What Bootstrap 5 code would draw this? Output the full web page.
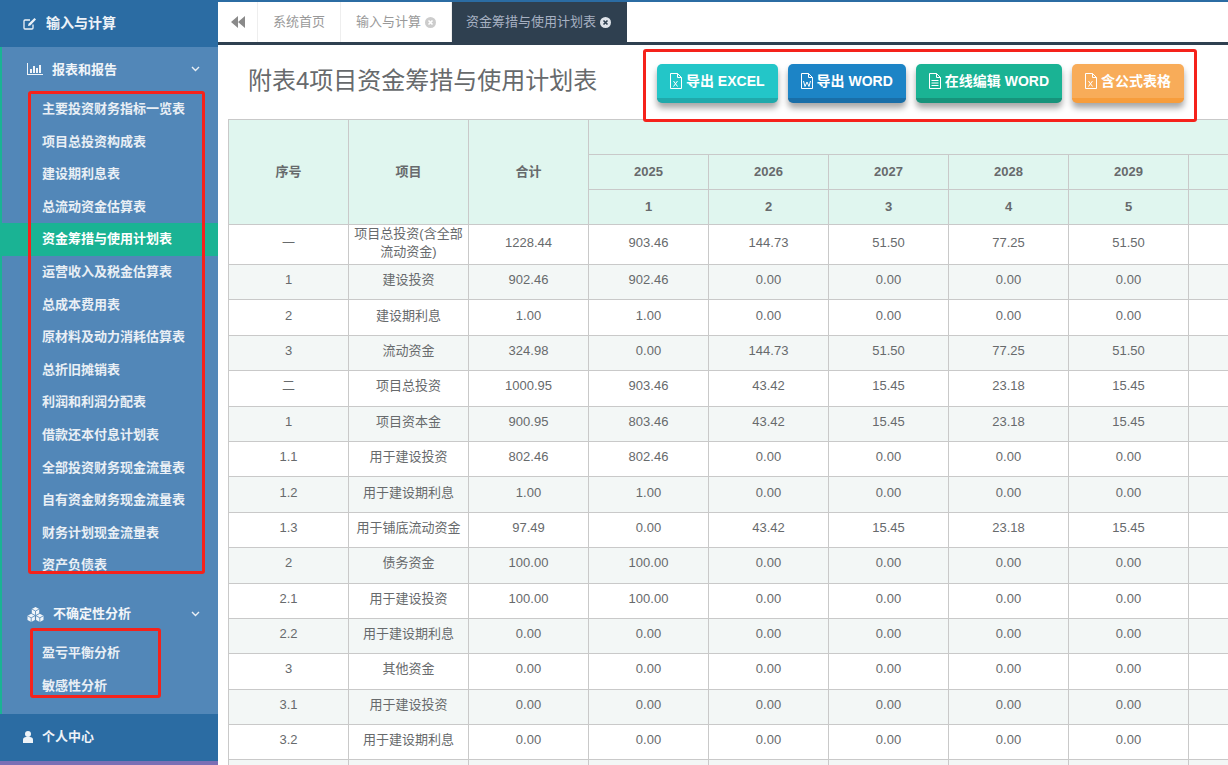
<!DOCTYPE html>
<html lang="zh-CN">
<head>
    <meta charset="UTF-8">
    <meta name="viewport" content="width=device-width, initial-scale=1.0">
    <title>附表4项目资金筹措与使用计划表</title>
    <link href="https://cdn.jsdelivr.net/npm/bootstrap@5.3.0/dist/css/bootstrap.min.css" rel="stylesheet">
    <style>
        html, body {
            height: 765px;
            overflow: hidden;
        }
        body {
            font-family: "Liberation Sans", "Noto Sans CJK SC", sans-serif;
            font-size: 13px;
            color: #676a6c;
        }
        .app-wrap {
            height: 765px;
            position: relative;
        }
        /* sidebar */
        .side-bar {
            width: 218px;
            height: 765px;
            background: #5287b8;
            color: #e9eff5;
            font-weight: 700;
            flex-shrink: 0;
        }
        .side-top {
            height: 47px;
            background: #2b6ca3;
            padding-left: 23px;
            font-size: 14px;
            color: #eef3f8;
            gap: 9px;
        }
        .side-mid {
            height: 667px;
            border-left: 2px solid #1ab394;
        }
        .side-head {
            height: 44.5px;
            font-size: 13px;
            padding-left: 25px;
            padding-right: 18px;
            margin-bottom: 1.5px;
            color: #f1f5f9;
        }
        .side-head.second {
            margin-top: 10px;
            margin-bottom: 1px;
        }
        .head-label {
            margin-left: 9px;
        }
        .side-link {
            height: 32.6px;
            line-height: 32.6px;
            padding-left: 40px;
            color: #e9eff5;
            text-decoration: none;
            display: block;
            white-space: nowrap;
        }
        .side-link.on {
            background: #1ab394;
            color: #fff;
        }
        .side-foot {
            height: 47px;
            background: #2b6ca3;
            padding-left: 23px;
            padding-bottom: 2px;
            color: #eef3f8;
            gap: 9px;
        }
        .side-strip {
            height: 4px;
            background: #7b6fb5;
        }
        /* tab strip */
        .main-area {
            min-width: 0;
            height: 765px;
            overflow: hidden;
        }
        .tab-strip {
            height: 45px;
            border-top: 2px solid #2b6ca3;
            border-bottom: 3px solid #2f4050;
            background: #fff;
        }
        .tab-back {
            width: 40px;
            border-right: 1px solid #eee;
        }
        .tab-item {
            padding: 0 15px;
            color: #999;
            border-right: 1px solid #eee;
            gap: 4px;
            white-space: nowrap;
        }
        .tab-item.on {
            background: #2f4050;
            color: #a7b1c2;
            border-right: 0;
            padding: 0 16px 0 14px;
        }
        /* title and buttons */
        .page-head {
            height: 74px;
            padding-left: 30px;
            padding-right: 44px;
        }
        .page-title {
            font-size: 24px;
            font-weight: 400;
            margin: 0;
            color: #676a6c;
            padding-bottom: 2px;
        }
        .btn-row {
            gap: 10px;
            margin-top: 3px;
        }
        .act-btn {
            height: 39px;
            font-size: 14px;
            font-weight: 700;
            color: #fff;
            border: 0;
            border-radius: 5px;
            padding: 0 13px;
            gap: 4px;
            display: flex;
            align-items: center;
            white-space: nowrap;
            box-shadow: 0 5px 6px rgba(0, 0, 0, .35);
        }
        .btn-cyan { background: #23c6c8; border-bottom: 5px solid #20a9ab; }
        .btn-blue { background: #1c84c6; border-bottom: 5px solid #196ea8; }
        .btn-teal { background: #1ab394; border-bottom: 5px solid #17937b; }
        .btn-amber { background: #f8ac59; border-bottom: 5px solid #f79d3c; }
        /* table */
        .plan-table {
            table-layout: fixed;
            width: 1080px;
            margin: 0 0 0 10px;
            border-collapse: collapse;
        }
        .plan-table col {
            width: 120px;
        }
        .plan-table th, .plan-table td {
            border: 1px solid #c9c9c9;
            text-align: center;
            vertical-align: middle;
            padding: 0 4px 4px;
            font-size: 13px;
            line-height: 20px;
            height: 35.4px;
            color: #676a6c;
            background: #fff;
        }
        .plan-table thead th {
            background: #e0f6ef;
            height: 35px;
            padding-bottom: 0;
            font-weight: 700;
        }
        .plan-table tbody tr.first-row td {
            height: 39px;
            line-height: 18px;
            padding-bottom: 3px;
        }
        .plan-table tbody tr:nth-child(even) td {
            background: #f3f7f6;
        }
        /* red marks laid over the screenshot */
        .mark-box {
            position: absolute;
            border: 3px solid #f5221b;
            border-radius: 3px;
            pointer-events: none;
        }
        .mark-a { left: 28px; top: 91px; width: 177px; height: 483px; }
        .mark-b { left: 30px; top: 628px; width: 131px; height: 70px; }
        .mark-c { left: 643px; top: 49px; width: 554px; height: 73px; }
    </style>
</head>
<body>
    <div class="app-wrap d-flex">
        <div class="side-bar d-flex flex-column">
            <div class="side-top d-flex align-items-center">
                <svg width="14" height="13" viewBox="0 0 14 13" fill="none" stroke="#eef3f8" stroke-width="1.3"><path d="M10 7.5V11a1 1 0 0 1-1 1H2a1 1 0 0 1-1-1V4a1 1 0 0 1 1-1h5"/><path d="M5 9l.5-2.3L11.5 1 13 2.5 7.3 8.5z" fill="#eef3f8" stroke="none"/></svg>
                <span>输入与计算</span>
            </div>
            <div class="side-mid">
                <div class="side-head d-flex align-items-center">
                    <svg width="16" height="12" viewBox="0 0 16 12" fill="#f1f5f9"><path d="M0 0h1v11h15v1H0z"/><path d="M3 6h2v4H3zM6 3h2v7H6zM9 5h2v5H9zM12 2h2v8h-2z"/></svg>
                    <span class="flex-grow-1 head-label">报表和报告</span>
                    <svg width="9" height="6" viewBox="0 0 9 6" fill="none" stroke="#e9eff5" stroke-width="1.4"><path d="M1 1l3.500 3.500L8 1"/></svg>
                </div>
                <div class="side-links">
                    <a class="side-link" href="#">主要投资财务指标一览表</a>
                    <a class="side-link" href="#">项目总投资构成表</a>
                    <a class="side-link" href="#">建设期利息表</a>
                    <a class="side-link" href="#">总流动资金估算表</a>
                    <a class="side-link on" href="#">资金筹措与使用计划表</a>
                    <a class="side-link" href="#">运营收入及税金估算表</a>
                    <a class="side-link" href="#">总成本费用表</a>
                    <a class="side-link" href="#">原材料及动力消耗估算表</a>
                    <a class="side-link" href="#">总折旧摊销表</a>
                    <a class="side-link" href="#">利润和利润分配表</a>
                    <a class="side-link" href="#">借款还本付息计划表</a>
                    <a class="side-link" href="#">全部投资财务现金流量表</a>
                    <a class="side-link" href="#">自有资金财务现金流量表</a>
                    <a class="side-link" href="#">财务计划现金流量表</a>
                    <a class="side-link" href="#">资产负债表</a>
                </div>
                <div class="side-head second d-flex align-items-center">
                    <svg width="17" height="15" viewBox="0 0 17 15" fill="#f1f5f9"><path d="M8.500 0l3.700 2v4.200L8.500 8.200 4.800 6.200V2z"/><path d="M4.200 6.800l3.700 2V13L4.200 15 .5 13V8.800zM12.800 6.800l3.700 2V13l-3.700 2-3.700-2V8.800z"/><path d="M4.800 2l3.700 2 3.700-2M8.500 4v4M.5 8.800l3.700 2 3.700-2M4.200 10.800V15M9.100 8.800l3.700 2 3.700-2M12.800 10.800V15" fill="none" stroke="#5287b8" stroke-width=".8"/></svg>
                    <span class="flex-grow-1 head-label">不确定性分析</span>
                    <svg width="9" height="6" viewBox="0 0 9 6" fill="none" stroke="#e9eff5" stroke-width="1.4"><path d="M1 1l3.500 3.500L8 1"/></svg>
                </div>
                <a class="side-link" href="#">盈亏平衡分析</a>
                <a class="side-link" href="#">敏感性分析</a>
            </div>
            <div class="side-foot d-flex align-items-center">
                <svg width="10" height="12" viewBox="0 0 10 12" fill="#eef3f8"><circle cx="5" cy="3" r="3"/><path d="M0 12V8.500C0 7 1.500 6 3 6h4c1.500 0 3 1 3 2.500V12z"/></svg>
                <span>个人中心</span>
            </div>
            <div class="side-strip"></div>
        </div>

        <div class="main-area flex-grow-1">
            <div class="tab-strip d-flex">
                <div class="tab-back d-flex align-items-center justify-content-center">
                    <svg width="14" height="12" viewBox="0 0 14 12" fill="#8a8a8a"><path d="M7 0v12L0 6zM14 0v12L7 6z"/></svg>
                </div>
                <div class="tab-item d-flex align-items-center">系统首页</div>
                <div class="tab-item d-flex align-items-center">输入与计算
                    <svg width="11" height="11" viewBox="0 0 11 11"><circle cx="5.500" cy="5.500" r="5.500" fill="#ccc"/><path d="M3.500 3.500l4 4M7.500 3.500l-4 4" stroke="#fff" stroke-width="1.6"/></svg>
                </div>
                <div class="tab-item on d-flex align-items-center">资金筹措与使用计划表
                    <svg width="11" height="11" viewBox="0 0 11 11"><circle cx="5.500" cy="5.500" r="5.500" fill="#dfe4ea"/><path d="M3.500 3.500l4 4M7.500 3.500l-4 4" stroke="#2f4050" stroke-width="1.6"/></svg>
                </div>
            </div>

            <div class="page-head d-flex align-items-center justify-content-between">
                <h2 class="page-title">附表4项目资金筹措与使用计划表</h2>
                <div class="d-flex btn-row">
                    <button type="button" class="btn act-btn btn-cyan">
                        <svg width="12" height="16" viewBox="0 0 12 16" fill="none" stroke="#fff"><path d="M.5.5h7l4 4v11H.5zM7.500.5v4h4"/><path d="M3.500 8l4 5.500M7.500 8l-4 5.500" stroke-width="1"/></svg>
                        导出 EXCEL
                    </button>
                    <button type="button" class="btn act-btn btn-blue">
                        <svg width="12" height="16" viewBox="0 0 12 16" fill="none" stroke="#fff"><path d="M.5.5h7l4 4v11H.5zM7.500.5v4h4"/><path d="M2.500 8l1.500 5.500 2-4.500 2 4.500L9.500 8" stroke-width="1"/></svg>
                        导出 WORD
                    </button>
                    <button type="button" class="btn act-btn btn-teal">
                        <svg width="12" height="16" viewBox="0 0 12 16" fill="none" stroke="#fff"><path d="M.5.5h7l4 4v11H.5zM7.500.5v4h4"/><path d="M2.500 7.500h7M2.500 10h7M2.500 12.500h7" stroke-width="1"/></svg>
                        在线编辑 WORD
                    </button>
                    <button type="button" class="btn act-btn btn-amber">
                        <svg width="12" height="16" viewBox="0 0 12 16" fill="none" stroke="#fff"><path d="M.5.5h7l4 4v11H.5zM7.500.5v4h4"/><path d="M3.500 8l4 5.500M7.500 8l-4 5.500" stroke-width="1"/></svg>
                        含公式表格
                    </button>
                </div>
            </div>

            <table class="plan-table">
                <colgroup><col><col><col><col><col><col><col><col><col></colgroup>
                <thead>
                    <tr>
                        <th rowspan="3">序号</th>
                        <th rowspan="3">项目</th>
                        <th rowspan="3">合计</th>
                        <th colspan="6"></th>
                    </tr>
                    <tr><th>2025</th><th>2026</th><th>2027</th><th>2028</th><th>2029</th><th></th></tr>
                    <tr><th>1</th><th>2</th><th>3</th><th>4</th><th>5</th><th></th></tr>
                </thead>
                <tbody id="planBody"></tbody>
            </table>
        </div>

        <div class="mark-box mark-a"></div>
        <div class="mark-box mark-b"></div>
        <div class="mark-box mark-c"></div>
    </div>

    <script src="https://cdn.jsdelivr.net/npm/bootstrap@5.3.0/dist/js/bootstrap.bundle.min.js"></script>
    <script>
        const zero = ['0.00', '0.00', '0.00', '0.00', '0.00'];
        const rows = [
            ['一', '项目总投资(含全部流动资金)', '1228.44', '903.46', '144.73', '51.50', '77.25', '51.50'],
            ['1', '建设投资', '902.46', '902.46', '0.00', '0.00', '0.00', '0.00'],
            ['2', '建设期利息', '1.00', '1.00', '0.00', '0.00', '0.00', '0.00'],
            ['3', '流动资金', '324.98', '0.00', '144.73', '51.50', '77.25', '51.50'],
            ['二', '项目总投资', '1000.95', '903.46', '43.42', '15.45', '23.18', '15.45'],
            ['1', '项目资本金', '900.95', '803.46', '43.42', '15.45', '23.18', '15.45'],
            ['1.1', '用于建设投资', '802.46', '802.46', '0.00', '0.00', '0.00', '0.00'],
            ['1.2', '用于建设期利息', '1.00', '1.00', '0.00', '0.00', '0.00', '0.00'],
            ['1.3', '用于铺底流动资金', '97.49', '0.00', '43.42', '15.45', '23.18', '15.45'],
            ['2', '债务资金', '100.00', '100.00', '0.00', '0.00', '0.00', '0.00'],
            ['2.1', '用于建设投资', '100.00', '100.00', '0.00', '0.00', '0.00', '0.00'],
            ['2.2', '用于建设期利息', '0.00', ...zero],
            ['3', '其他资金', '0.00', ...zero],
            ['3.1', '用于建设投资', '0.00', ...zero],
            ['3.2', '用于建设期利息', '0.00', ...zero],
            ['', '', '', '', '', '', '', '']
        ];
        const body = document.getElementById('planBody');
        // last column lies past the right edge of the window, so it stays empty
        body.innerHTML = rows.map(function(r, i) {
            const cells = r.concat('').map(function(c) { return '<td>' + c + '</td>'; }).join('');
            return '<tr' + (i === 0 ? ' class="first-row"' : '') + '>' + cells + '</tr>';
        }).join('');
    </script>
</body>
</html>
